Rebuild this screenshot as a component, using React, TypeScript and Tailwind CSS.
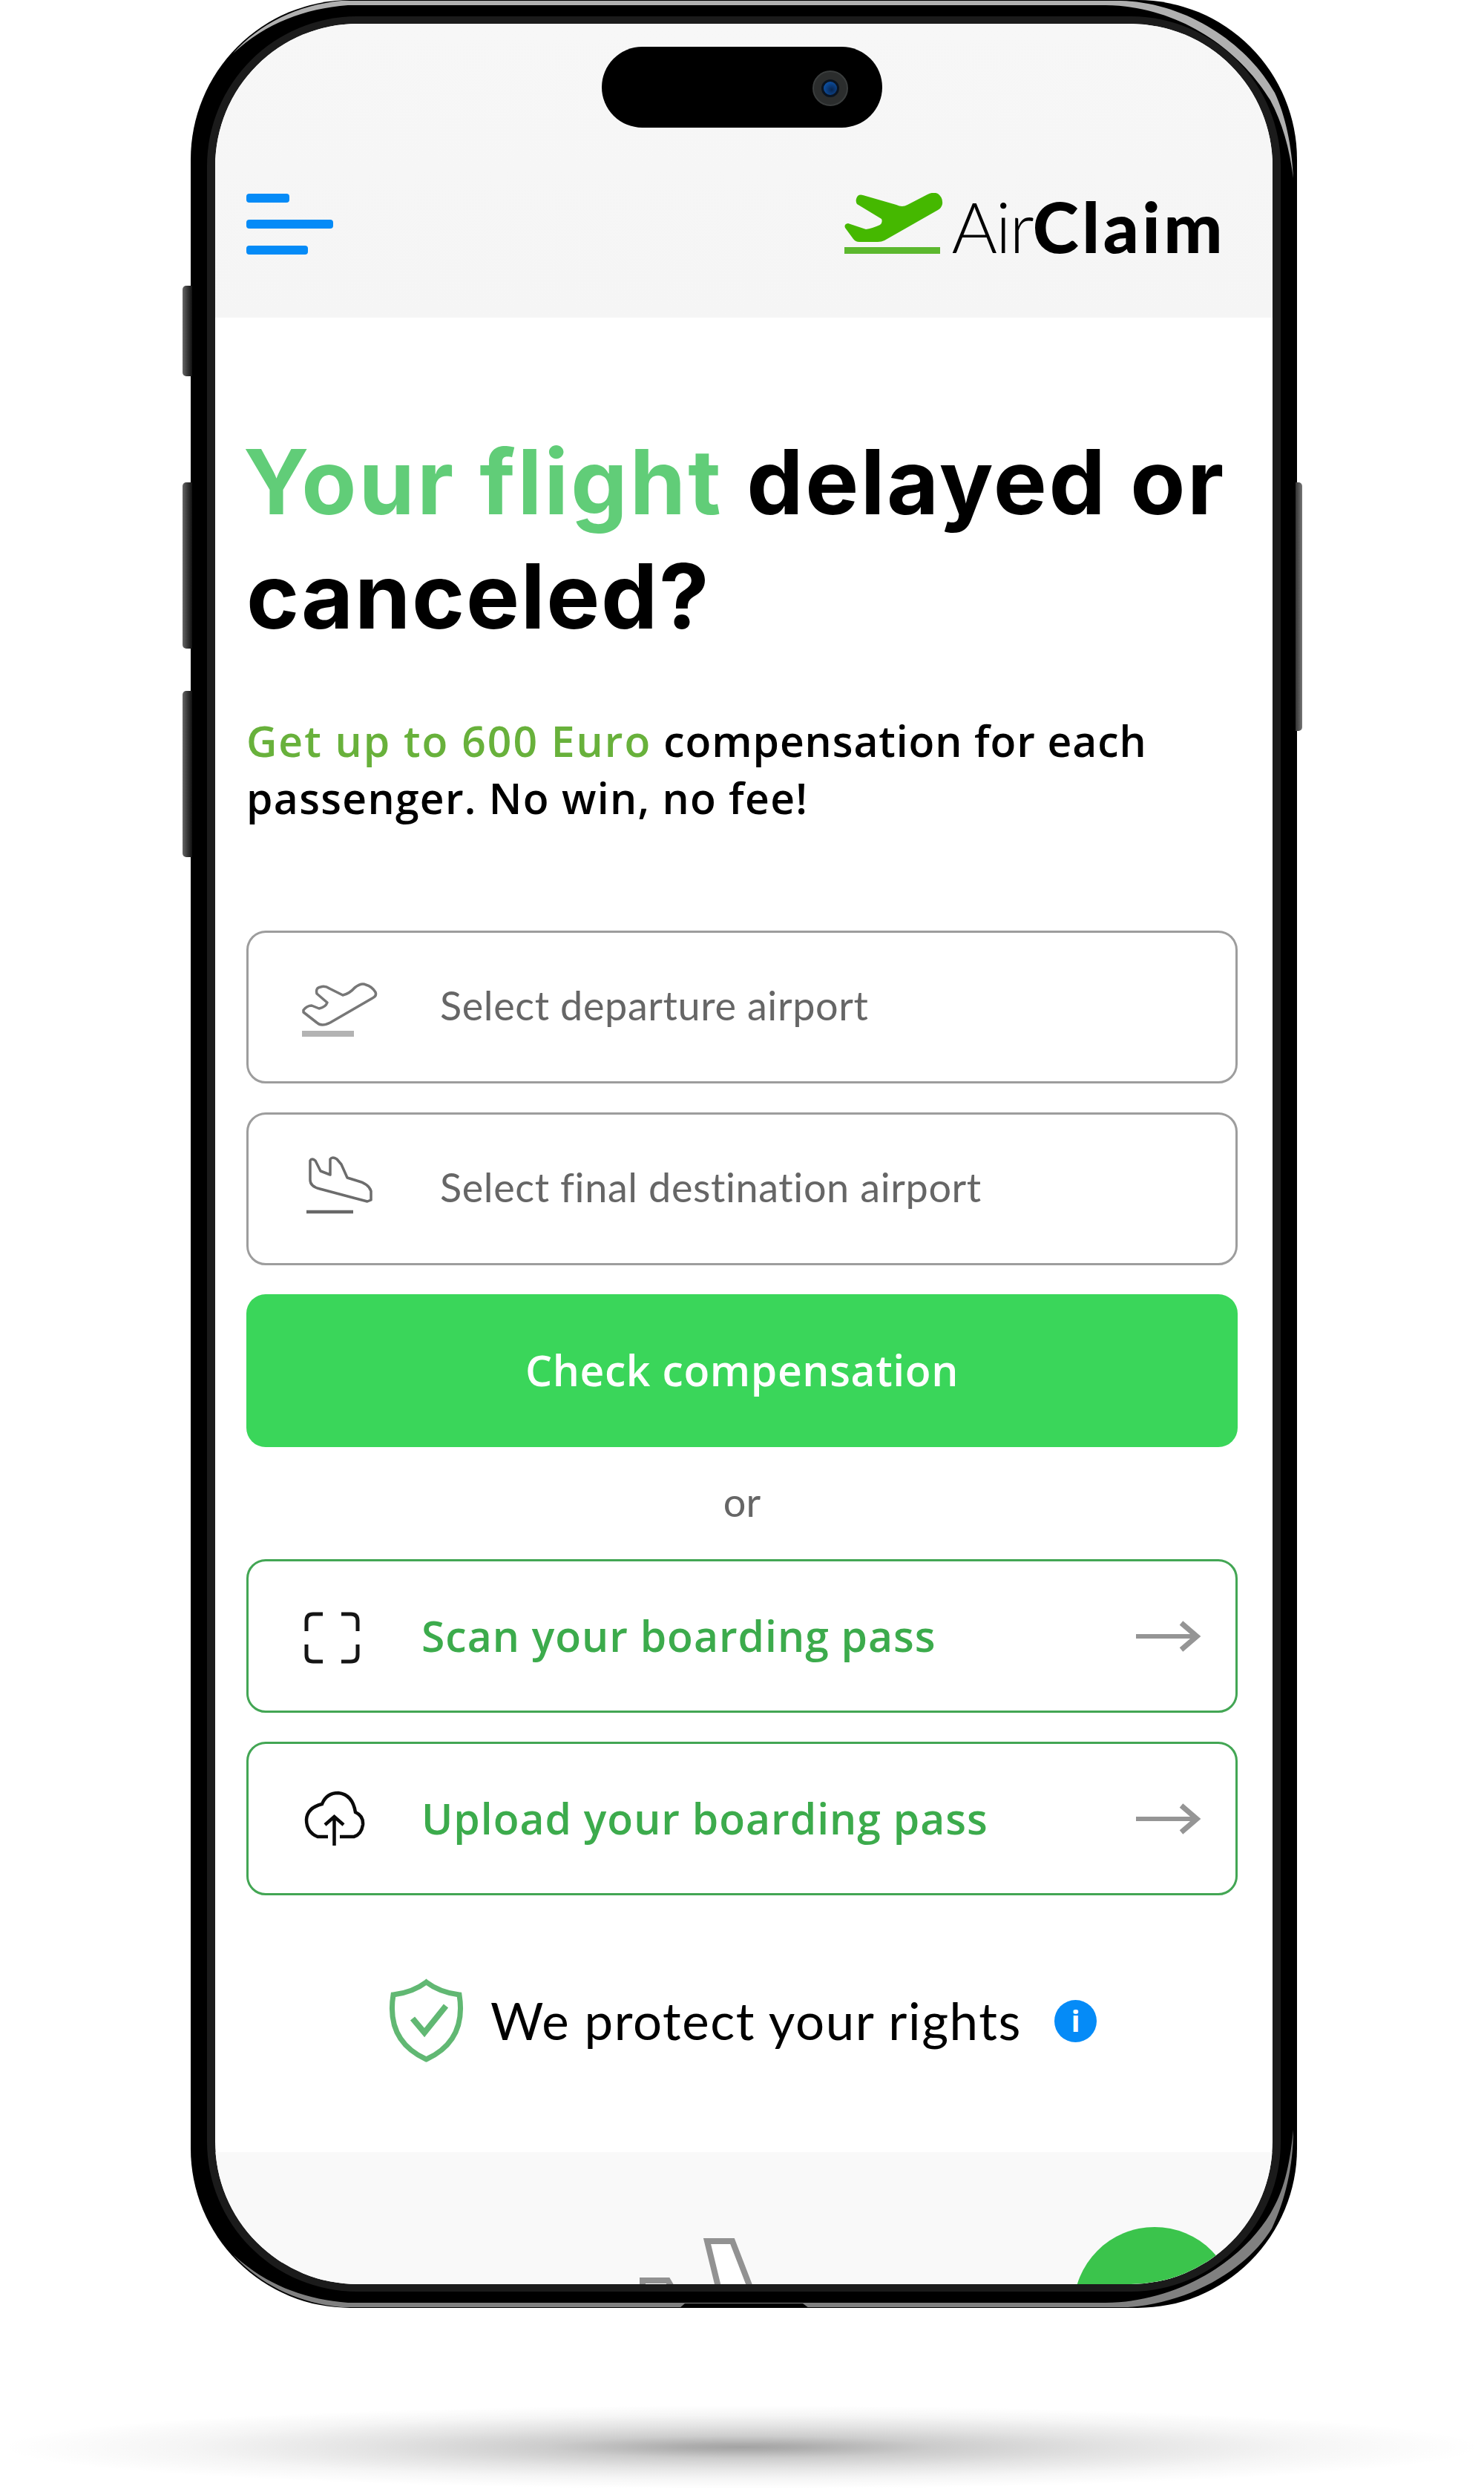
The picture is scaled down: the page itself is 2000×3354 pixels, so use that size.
import { type ReactNode } from 'react'

function MenuButton() {
  return (
    <button aria-label="Open menu" className="mt-px flex flex-col items-start gap-[23px]">
      <span className="h-3 w-[58px] rounded-[4px] bg-[#058bf7]" />
      <span className="h-3 w-[117px] rounded-[4px] bg-[#058bf7]" />
      <span className="h-3 w-[83px] rounded-[4px] bg-[#058bf7]" />
    </button>
  )
}

function Logo() {
  return (
    <div className="flex items-start">
      <svg className="h-[84px] w-[134px]" viewBox="0 0 134 84">
        <path
          d="M16 8Q18 1 25 3L70 16Q78 20 85 16L112 2Q120-2 126 1Q133 6 132 15Q131 20 126 23L54 64Q50 66 45 66H20Q15 66 12 62L1 47Q-1 42 5 41L29 49Q37 48 48 43Q52 40 50 35L17 15Q15 12 16 8Z"
          fill="#45b800"
        />
        <path d="M0 77.500H129" stroke="#5cb82e" strokeWidth="9" />
      </svg>
      <p className="-mt-[1px] ml-[10px] whitespace-nowrap font-['Lato'] text-[94px] leading-[92px] text-black">
        <span className="font-light tracking-[-2px]">Air</span>
        <span className="font-black tracking-[4.500px]">Claim</span>
      </p>
    </div>
  )
}

function AirportField({ icon, label }: { icon: ReactNode; label: string }) {
  return (
    <div className="flex h-[206px] items-center rounded-[26px] border-[3.5px] border-[#9d9d9d] bg-white">
      <div className="ml-[70px] w-[188px]">{icon}</div>
      <span className="-mt-[5px] whitespace-nowrap font-['Lato'] text-[54px] tracking-[0.6px] text-[#666]">{label}</span>
    </div>
  )
}

function BoardingPassLink({ icon, label }: { icon: ReactNode; label: string }) {
  return (
    <div className="flex h-[207px] items-center rounded-[26px] border-[3.5px] border-[#43a654] bg-white">
      <div className="ml-[75px] w-[158px]">{icon}</div>
      <span className="whitespace-nowrap font-['Open_Sans'] text-[57px] font-semibold tracking-[1px] text-[#3cab4c]">{label}</span>
      <svg className="mr-[46px] ml-auto h-[44px] w-[90px]" viewBox="0 0 90 44" fill="none" stroke="#959595">
        <path d="M2 22H84" strokeWidth="6" />
        <path d="M63 4L84 22L63 40" strokeWidth="7" />
      </svg>
    </div>
  )
}

function TakeoffIcon() {
  return (
    <svg className="mt-[12px] h-[80px] w-[106px]" viewBox="0 0 106 80" fill="none">
      <path
        d="M4 38Q9 32 15 32L25 36Q34 34 36 28L22 16Q20 8 27 7Q33 5 39 9L57 18Q66 16 73 8Q82 1 88 4Q96 6 101 14Q103 19 97 22L40 55Q28 61 22 55L4 41Z"
        stroke="#777"
        strokeWidth="3.500"
        strokeLinejoin="round"
      />
      <path d="M2 70H72" stroke="#b3b3b3" strokeWidth="8" />
    </svg>
  )
}

function LandingIcon() {
  return (
    <svg className="-mt-[8px] ml-[3px] h-[84px] w-[106px]" viewBox="0 0 106 84" fill="none" stroke="#6c6c6c" strokeWidth="3.500" strokeLinejoin="round">
      <path d="M10 34V8Q12 4 17 8L24 22L37 27V6Q40 2 46 6L52 13L60 31L73 35Q89 39 92 49V61L87 63L68 58L23 46Q10 43 10 34Z" />
      <path d="M5 77H68" strokeWidth="4.500" stroke="#686868" />
    </svg>
  )
}

function ScanIcon() {
  return (
    <svg className="mt-[4px] h-[70px] w-[75px]" viewBox="0 0 75 70" fill="none" stroke="#151515" strokeWidth="5">
      <path d="M3 26V12Q3 3 12 3H25M50 3H63Q72 3 72 12V26M72 44V58Q72 67 63 67H50M25 67H12Q3 67 3 58V44" />
    </svg>
  )
}

function CloudUploadIcon() {
  return (
    <svg className="h-[76px] w-[82px]" viewBox="0 0 82 76" fill="none" stroke="#0a0a0a" strokeWidth="4.500">
      <path d="M32 62H18Q3 56 3 39Q4 23 24 18Q30 3 46 3Q65 5 69 29Q80 34 79 46Q77 59 67 62H48" />
      <path d="M40.500 74V36M28 46L40.500 35L53 46" />
    </svg>
  )
}

function ShieldIcon() {
  return (
    <svg className="h-[114px] w-[103px]" viewBox="0 0 103 114" fill="none" stroke="#61b873" strokeWidth="7">
      <path d="M51.500 5Q33 19 7 22Q-3 84 51.500 109Q106 84 96 22Q70 19 51.500 5Z" />
      <path d="M33 54L49 73L78 37" strokeWidth="8" />
    </svg>
  )
}

function Screen() {
  return (
    <div className="flex h-[3046px] w-[1425px] flex-col overflow-hidden rounded-[192px] bg-white">
      <header className="flex h-[396px] shrink-0 items-start justify-between bg-linear-to-b from-[#f7f7f7] to-[#f5f5f5] pt-[228px] pr-[63px] pl-[42px]">
        <MenuButton />
        <Logo />
      </header>

      <main className="flex h-[2472px] shrink-0 flex-col px-[42px] pr-[47px]">
        <h1 className="mt-[144px] whitespace-nowrap font-['Inter'] text-[121px] leading-[154px] font-bold text-black">
          <span className="-ml-[4px] tracking-[3.100px] text-[#61cd78]">Your flight </span>
          <span className="tracking-[2.500px]">delayed or</span>
          <br />
          <span className="tracking-[1.700px]">canceled?</span>
        </h1>
        <p className="mt-[80px] whitespace-nowrap font-['Open_Sans'] text-[57px] leading-[77px] font-semibold tracking-[1.300px] text-black">
          <span className="tracking-[2px] text-[#68b13b]">Get up to 600 Euro</span>{' '}
          <span className="tracking-[0.9px]">compensation for each</span>
          <br />
          passenger. No win, no fee!
        </p>

        <div className="mt-[140px] flex flex-col gap-[39px]">
          <AirportField icon={<TakeoffIcon />} label="Select departure airport" />
          <AirportField icon={<LandingIcon />} label="Select final destination airport" />
          <button className="h-[206px] rounded-[26px] bg-[#3ad65a] font-['Open_Sans'] text-[57px] font-semibold tracking-[0.6px] text-white">
            Check compensation
          </button>
        </div>

        <p className="flex h-[151px] items-center justify-center pb-[4px] font-['Lato'] text-[54px] text-[#666]">or</p>

        <div className="flex flex-col gap-[39px]">
          <BoardingPassLink icon={<ScanIcon />} label="Scan your boarding pass" />
          <BoardingPassLink icon={<CloudUploadIcon />} label="Upload your boarding pass" />
        </div>

        <div className="mt-[112px] ml-[191px] flex items-center">
          <ShieldIcon />
          <span className="ml-[35px] whitespace-nowrap font-['Lato'] text-[69px] tracking-[1.600px] text-black">We protect your rights</span>
          <span className="ml-[44px] flex size-[57px] items-center justify-center rounded-full bg-[#058bf7] font-['Open_Sans'] text-[40px] font-bold text-white">
            i
          </span>
        </div>
      </main>

      <footer className="flex-1 bg-[#f9f9f9]">
        <svg className="block h-[178px] w-[1425px]" viewBox="290 2900 1425 178">
          <g fill="#fff" stroke="#929292" strokeWidth="8">
            <path d="M866 3090V3073H900L910 3090" />
            <path d="M970 3090L953 3020H987L1014 3090" />
          </g>
          <circle cx="1556" cy="3110" r="109" fill="#3bc44c" />
        </svg>
      </footer>
    </div>
  )
}

function SideKeys() {
  return (
    <>
      <span className="absolute top-[385px] left-[-11px] h-[122px] w-[13px] rounded-l-[5px] bg-linear-to-r from-[#666] to-[#111]" />
      <span className="absolute top-[650px] left-[-11px] h-[224px] w-[13px] rounded-l-[5px] bg-linear-to-r from-[#666] to-[#111]" />
      <span className="absolute top-[931px] left-[-11px] h-[224px] w-[13px] rounded-l-[5px] bg-linear-to-r from-[#666] to-[#111]" />
      <span className="absolute top-[650px] right-[-7px] h-[335px] w-[9px] rounded-r-[5px] bg-linear-to-l from-[#777] to-[#333]" />
    </>
  )
}

// metallic highlights running along the rounded rim
function RimHighlights() {
  return (
    <svg className="absolute inset-0 h-[3110px] w-[1491px]" viewBox="257 0 1491 3110">
      <path
        d="M314 72C350 32 400 7 460 1H1510C1600 3 1682 60 1718 125C1732 155 1741 195 1743 240C1738 200 1728 165 1712 135C1672 68 1590 8 1490 7H469C410 12 360 30 314 72Z"
        fill="#b0b0b0"
      />
      <path
        d="M314 3038C350 3078 400 3103 460 3109H1520C1600 3104 1679 3060 1714 3003C1732 2965 1743 2920 1743 2870C1738 2920 1730 2953 1712 2983C1675 3045 1590 3102 1490 3103H469C410 3098 360 3080 314 3038Z"
        fill="#808080"
      />
      <path d="M916 3110L923 3104H1082L1090 3110Z" fill="#000" />
    </svg>
  )
}

export default function App() {
  return (
    <div className="flex h-[3354px] w-[2000px] flex-col overflow-hidden bg-white">
      <div className="relative ml-[257px] h-[3110px] w-[1491px] shrink-0">
        <SideKeys />
        <div className="h-[3110px] rounded-[215px] bg-black p-[22px]">
          <div className="h-[3066px] rounded-[202px] bg-[#1b1b1b] p-[10px] pl-[11px]">
            <Screen />
          </div>
        </div>
        <RimHighlights />
        <div className="absolute top-[63px] left-[554px] flex h-[109px] w-[378px] items-center justify-end rounded-full bg-black pr-[46px]">
          <div className="mt-[2px] flex size-[48px] items-center justify-center rounded-full border-2 border-[#3a3d3d] bg-[#2b2d2d]">
            <div className="size-[24px] rounded-full border-3 border-[#0b1420] bg-radial-[at_60%_60%] from-[#08254f] to-[#0f5fc0]" />
          </div>
        </div>
      </div>
      <div className="mt-[131px] h-[113px] w-[2000px] shrink-0 bg-[radial-gradient(closest-side,rgba(0,0,0,0.36),rgba(0,0,0,0.32)_8%,rgba(0,0,0,0.2)_26%,rgba(0,0,0,0.11)_50%,rgba(0,0,0,0.04)_75%,transparent)]" />
    </div>
  )
}
